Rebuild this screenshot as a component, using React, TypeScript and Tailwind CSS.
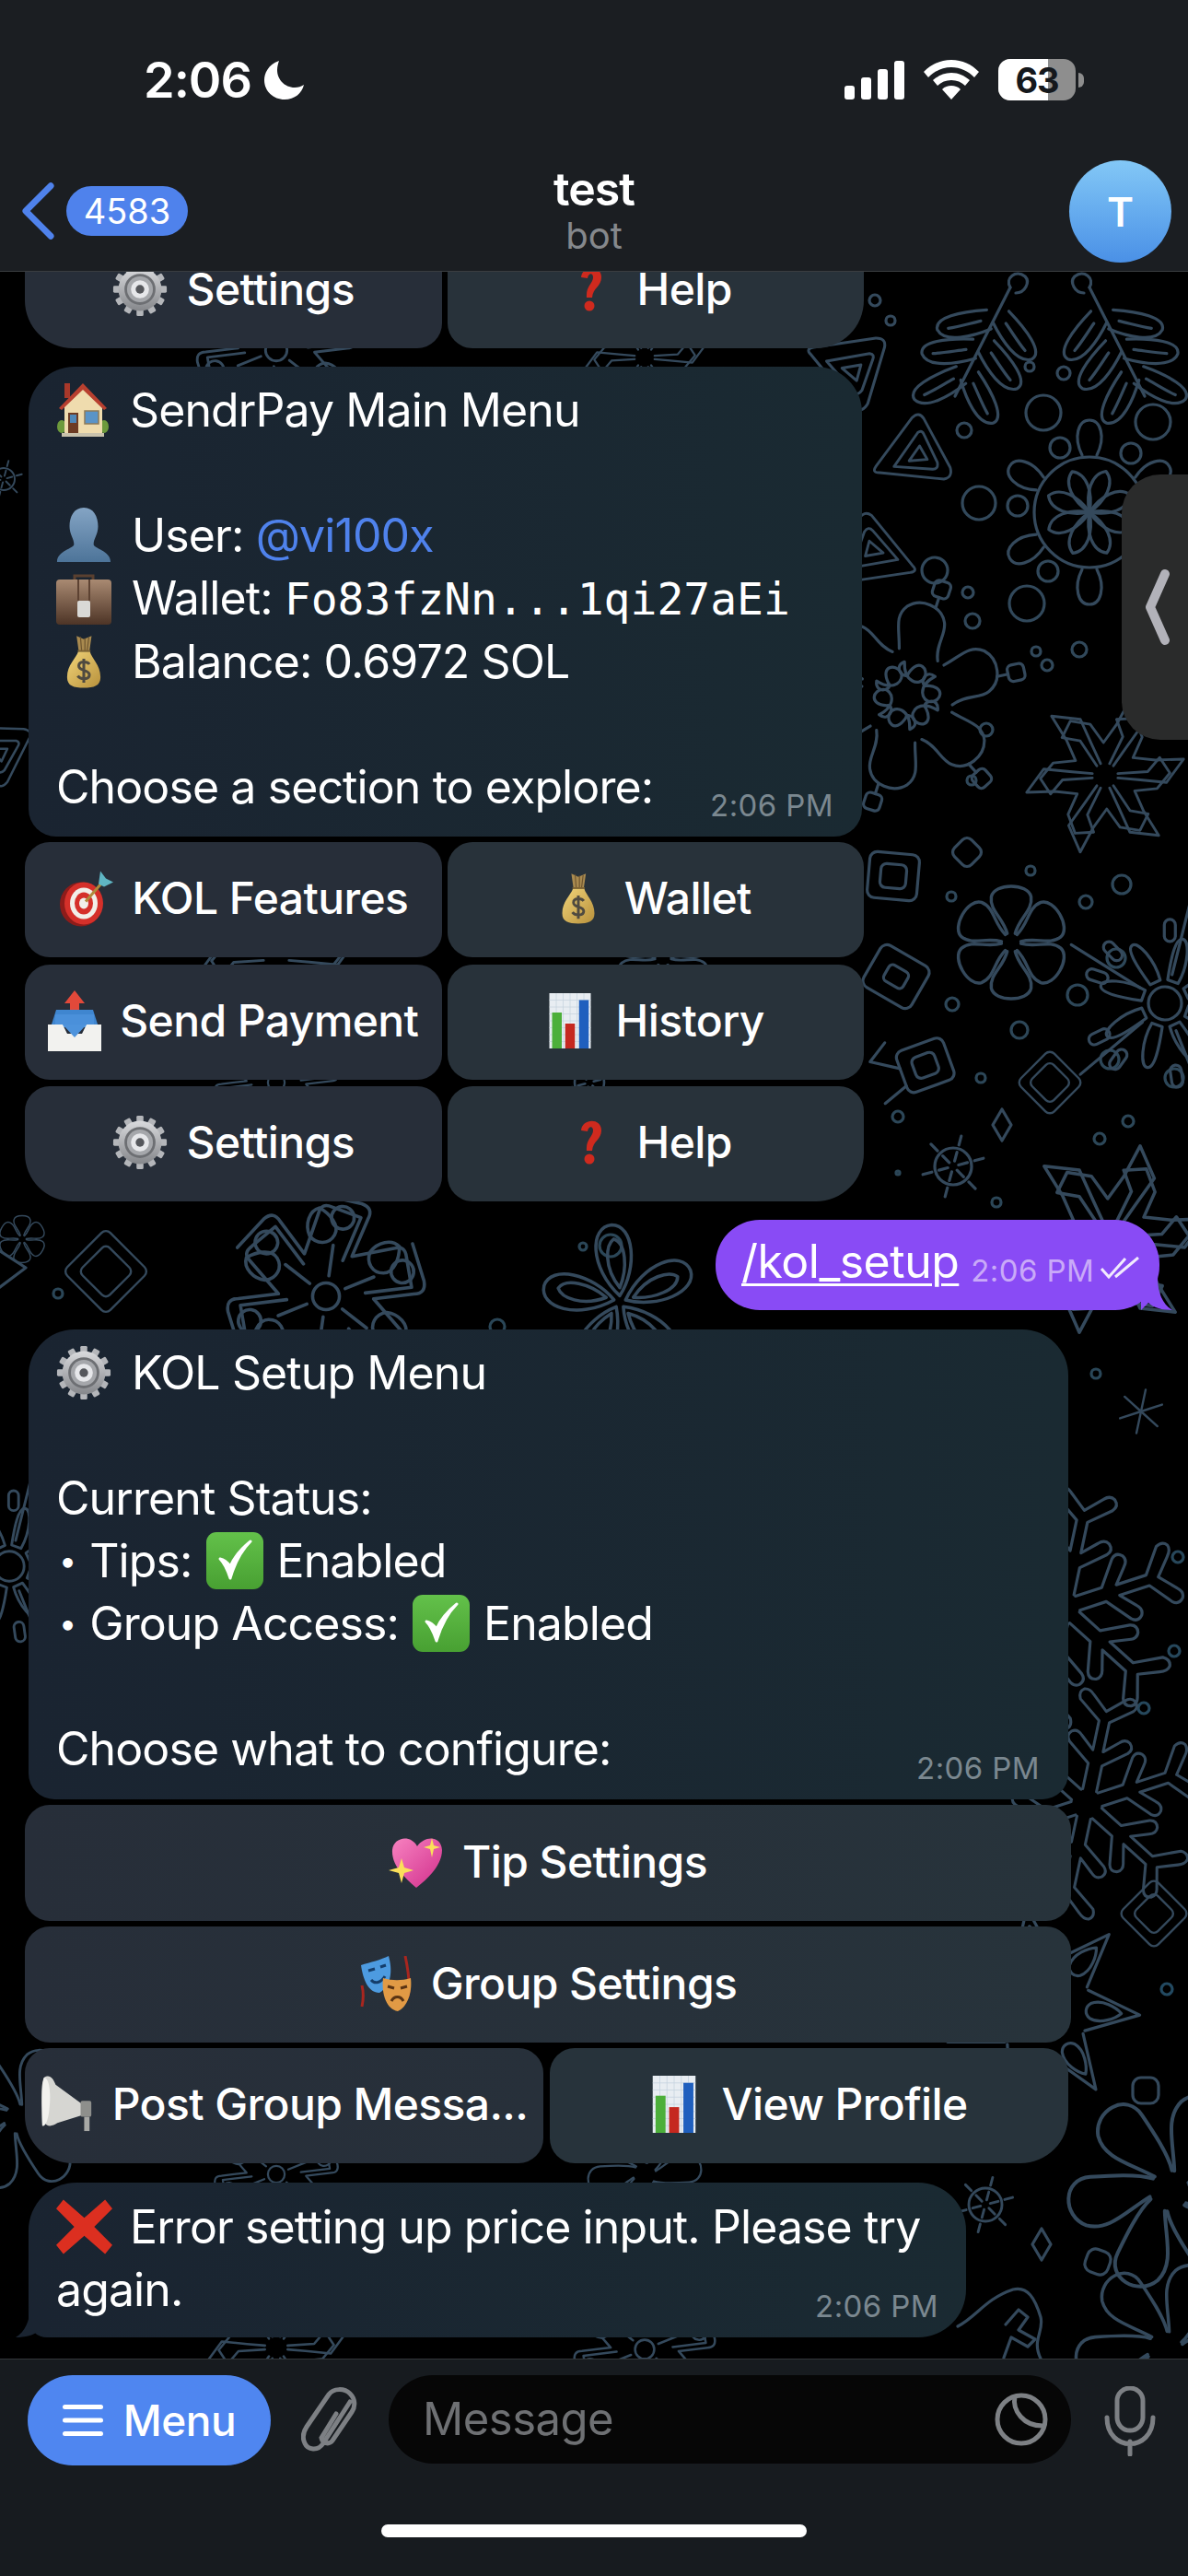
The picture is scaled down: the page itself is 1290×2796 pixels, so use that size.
import type { ReactNode } from "react";

const sans = "font-['Inter','Noto_Sans',sans-serif]";

/* ---------- emoji, drawn because no colour emoji font is installed ---------- */

function Gear({ className }: { className: string }) {
  const teeth = Array.from({ length: 12 }, (_, i) => i * 30);
  return (
    <svg viewBox="0 0 64 64" className={className}>
      <defs>
        <linearGradient id="gearBody" x1="0" y1="0" x2="0" y2="1">
          <stop offset="0" stopColor="#d9dadd" />
          <stop offset="1" stopColor="#85878b" />
        </linearGradient>
      </defs>
      {teeth.map((a) => (
        <rect key={a} x="28" y="1" width="8" height="12" rx="1.5" fill="#b4b6ba" transform={`rotate(${a} 32 32)`} />
      ))}
      <circle cx="32" cy="32" r="25" fill="url(#gearBody)" />
      <circle cx="32" cy="32" r="18" fill="#6d6f73" />
      <circle cx="32" cy="32" r="15" fill="#a5a7ab" />
      <circle cx="32" cy="32" r="10.5" fill="#e6e7ea" />
      <circle cx="32" cy="32" r="5" fill="#55575c" />
    </svg>
  );
}

function MoneyBag({ className }: { className: string }) {
  return (
    <svg viewBox="0 0 64 96" className={className}>
      <defs>
        <linearGradient id="bagBody" x1="0" y1="0" x2="1" y2="1">
          <stop offset="0" stopColor="#f1d479" />
          <stop offset="1" stopColor="#b8913c" />
        </linearGradient>
      </defs>
      <path d="M19 2 L32 8 L46 2 L42 30 L23 30 Z" fill="#a98a4f" />
      <path d="M26 4 L28 28 M34 6 L34 28 M41 5 L38 28" stroke="#6f5630" strokeWidth="2" />
      <path d="M22 30 L43 30 C46 42 62 54 62 76 C62 92 50 95 32 95 C14 95 2 92 2 76 C2 54 18 42 22 30 Z" fill="url(#bagBody)" />
      <path d="M21 29 H44" stroke="#7c6232" strokeWidth="3" />
      <path d="M42 53 C38 47 23 47 23 56 C23 66 42 62 42 72 C42 81 26 81 21 74 M32 43 V86" fill="none" stroke="#4f4a40" strokeWidth="5" />
    </svg>
  );
}

function BarChart({ className }: { className: string }) {
  return (
    <svg viewBox="0 0 60 80" className={className}>
      <rect width="60" height="80" fill="#e8edf2" />
      <path d="M0 10H60M0 20H60M0 30H60M0 40H60M0 50H60M0 60H60M0 70H60M10 0V80M20 0V80M30 0V80M40 0V80M50 0V80" stroke="#c5d3de" strokeWidth="1" />
      <rect x="4" y="28" width="14" height="52" fill="#4caf3a" />
      <rect x="23" y="44" width="14" height="36" fill="#c5281f" />
      <rect x="43" y="10" width="14" height="70" fill="#1f5fbe" />
    </svg>
  );
}

function CheckBox({ className }: { className: string }) {
  return (
    <svg viewBox="0 0 62 62" className={className}>
      <defs>
        <linearGradient id="checkBody" x1="0" y1="0" x2="0" y2="1">
          <stop offset="0" stopColor="#63c14a" />
          <stop offset="1" stopColor="#48a032" />
        </linearGradient>
      </defs>
      <rect width="62" height="62" rx="11" fill="url(#checkBody)" />
      <path d="M15 29 C19 33 23 41 26 50 C31 33 38 20 48 10 C38 18 30 28 26 37 C23 33 20 30 15 29 Z" fill="#fff" stroke="#fff" strokeWidth="3" strokeLinejoin="round" />
    </svg>
  );
}

function House({ className }: { className: string }) {
  return (
    <svg viewBox="0 0 58 58" className={className}>
      <ellipse cx="6" cy="47" rx="5" ry="7" fill="#6d9a3c" />
      <ellipse cx="52" cy="47" rx="5" ry="7" fill="#6d9a3c" />
      <rect x="9" y="0" width="6" height="16" fill="#a8382a" />
      <path d="M9 24 L29 3 L50 24 V54 H9 Z" fill="#efdcae" />
      <path d="M3 27 L29 0 L55 27 L52 29 L29 7 L6 29 Z" fill="#b8402f" />
      <rect x="13" y="32" width="11" height="22" fill="#6d3c24" />
      <rect x="15" y="34" width="7" height="9" fill="#4e87b8" />
      <rect x="31" y="30" width="15" height="14" fill="#5a94c8" stroke="#8d7a58" strokeWidth="1.5" />
      <rect x="6" y="54" width="46" height="4" fill="#c9c2ac" />
    </svg>
  );
}

function Bust({ className }: { className: string }) {
  return (
    <svg viewBox="0 0 60 62" className={className}>
      <defs>
        <linearGradient id="bustBody" x1="0" y1="0" x2="0" y2="1">
          <stop offset="0" stopColor="#84a4c4" />
          <stop offset="1" stopColor="#4d7499" />
        </linearGradient>
      </defs>
      <path d="M30 0 C41 0 46 10 46 21 C46 30 41 35 41 41 C41 46 60 48 60 61 H0 C0 48 19 46 19 41 C19 35 14 30 14 21 C14 10 19 0 30 0 Z" fill="url(#bustBody)" />
    </svg>
  );
}

function Briefcase({ className }: { className: string }) {
  return (
    <svg viewBox="0 0 60 56" className={className}>
      <defs>
        <linearGradient id="caseBody" x1="0" y1="0" x2="0" y2="1">
          <stop offset="0" stopColor="#a98a72" />
          <stop offset="1" stopColor="#4d3426" />
        </linearGradient>
      </defs>
      <path d="M20 8 V3 H40 V8" fill="none" stroke="#5a4030" strokeWidth="3" />
      <rect y="7" width="60" height="49" rx="4" fill="url(#caseBody)" />
      <path d="M24 7 V30 M36 7 V30" stroke="#5d4232" strokeWidth="2" />
      <rect x="23" y="30" width="14" height="18" rx="2" fill="#d9d9d6" />
    </svg>
  );
}

function Target({ className }: { className: string }) {
  return (
    <svg viewBox="0 0 60 60" className={className}>
      <ellipse cx="25" cy="36" rx="23" ry="24" fill="#8e1c1a" />
      <ellipse cx="28" cy="35" rx="21" ry="23" fill="#d5302a" />
      <ellipse cx="28" cy="35" rx="15" ry="17" fill="#f1efe9" />
      <ellipse cx="28" cy="35" rx="10" ry="12" fill="#d5302a" />
      <ellipse cx="28" cy="35" rx="5" ry="6" fill="#f1efe9" />
      <path d="M30 33 L50 10" stroke="#b08a3c" strokeWidth="3" />
      <path d="M44 14 L46 0 L52 8 L60 12 L50 17 Z" fill="#5fb6c4" />
    </svg>
  );
}

function Outbox({ className }: { className: string }) {
  return (
    <svg viewBox="0 0 58 66" className={className}>
      <path d="M29 0 L40 14 H34 V24 H24 V14 H18 Z" fill="#e2493a" />
      <path d="M9 21 H49 L55 40 H3 Z" fill="#3f86d0" />
      <path d="M8 26 H50 V40 H8 Z" fill="#4a90da" />
      <path d="M0 37 H16 L21 47 H37 L42 37 H58 V66 H0 Z" fill="#f2f2ef" />
      <path d="M16 37 L29 51 L42 37 Z" fill="#4d93dc" />
    </svg>
  );
}

function Question({ className }: { className: string }) {
  return (
    <svg viewBox="0 0 26 48" className={className}>
      <path d="M2 11 C3 -2 24 -3 24 11 C24 21 15 22 14 33 H8 C7 20 15 18 15 11 C15 6 10 6 9 12 Z" fill="#cf2a1e" />
      <circle cx="11" cy="42" r="5.5" fill="#cf2a1e" />
    </svg>
  );
}

function SparkleHeart({ className }: { className: string }) {
  return (
    <svg viewBox="0 0 60 58" className={className}>
      <defs>
        <linearGradient id="heartBody" x1="0" y1="0" x2="1" y2="1">
          <stop offset="0" stopColor="#f782c0" />
          <stop offset="1" stopColor="#d12f8c" />
        </linearGradient>
      </defs>
      <path d="M30 57 C14 44 3 30 4 16 C5 3 23 -2 31 12 C39 0 57 0 58 16 C58 32 44 46 30 57 Z" fill="url(#heartBody)" />
      <path d="M14 25 L17 35 L27 38 L17 41 L14 52 L11 41 L0 38 L11 35 Z" fill="#fbe05a" />
      <path d="M47 3 L49 11 L56 13 L49 15 L47 24 L45 15 L38 13 L45 11 Z" fill="#fbe05a" />
    </svg>
  );
}

function Masks({ className }: { className: string }) {
  return (
    <svg viewBox="0 0 58 60" className={className}>
      <path d="M50 0 C53 14 56 30 53 44" fill="none" stroke="#a8261f" strokeWidth="3" />
      <path d="M3 32 C5 40 5 46 3 55" fill="none" stroke="#a8261f" strokeWidth="3" />
      <path d="M2 10 C12 7 24 4 32 0 C36 14 36 32 22 40 C10 40 4 25 2 10 Z" fill="#4d9be0" />
      <path d="M10 16 L17 14 M23 12 L29 10" stroke="#153e6b" strokeWidth="3" />
      <path d="M13 26 C17 31 24 29 28 22" fill="none" stroke="#153e6b" strokeWidth="3" />
      <path d="M26 24 C36 27 46 27 56 24 C58 40 52 56 42 60 C30 58 24 42 26 24 Z" fill="#e19a45" />
      <path d="M31 33 L38 35 M45 35 L52 33" stroke="#5a3414" strokeWidth="3" />
      <path d="M35 49 C38 43 45 43 48 49" fill="none" stroke="#5a3414" strokeWidth="3" />
    </svg>
  );
}

function Megaphone({ className }: { className: string }) {
  return (
    <svg viewBox="0 0 58 64" className={className}>
      <path d="M3 2 C9 -2 13 2 16 10 L46 32 L46 44 L18 53 C10 58 1 60 1 36 C0 20 0 8 3 2 Z" fill="#d6d6d2" />
      <path d="M3 2 C9 2 11 20 9 36 C8 50 4 58 1 56 C0 40 0 12 3 2 Z" fill="#f2f2ef" />
      <rect x="44" y="28" width="12" height="18" rx="2" fill="#8e8f8c" />
      <path d="M48 46 V62 H54 V46" fill="#a7a8a5" />
    </svg>
  );
}

function RedCross({ className }: { className: string }) {
  return (
    <svg viewBox="0 0 62 60" className={className}>
      <path d="M8 0 L31 20 L54 0 L62 10 L42 30 L62 50 L54 60 L31 40 L8 60 L0 50 L20 30 L0 10 Z" fill="#dc2f20" />
    </svg>
  );
}

/* ---------- wallpaper doodles ---------- */

function Spin({ n, children, at = 0 }: { n: number; children: ReactNode; at?: number }) {
  return (
    <>
      {Array.from({ length: n }, (_, i) => (
        <g key={i} transform={`rotate(${at + (i * 360) / n})`}>
          {children}
        </g>
      ))}
    </>
  );
}

function At({ x, y, r = 0, s = 1, flip = false, children }: { x: number; y: number; r?: number; s?: number; flip?: boolean; children: ReactNode }) {
  return <g transform={`translate(${x} ${y}) rotate(${r}) scale(${flip ? -s : s} ${s})`}>{children}</g>;
}

function Rings({ items }: { items: number[][] }) {
  return (
    <>
      {items.map(([x, y, r]) => (
        <circle key={`${x}-${y}`} cx={x} cy={y} r={r} />
      ))}
    </>
  );
}

const Tri = () => (
  <>
    <path d="M-44 -30 Q-50 -38 -40 -38 L32 -36 Q44 -34 40 -24 L10 36 Q2 46 -6 38 Z" />
    <path d="M-28 -20 L22 -20 Q28 -18 24 -12 L6 20 Q0 26 -4 20 Z" />
    <path d="M-12 -9 L10 -9 L2 8 Z" />
  </>
);

const DoubleDiamond = ({ a = 30, b = 20 }: { a?: number; b?: number }) => (
  <>
    <rect x={-a} y={-a} width={a * 2} height={a * 2} rx="9" transform="rotate(45) scale(0.75)" />
    <rect x={-b} y={-b} width={b * 2} height={b * 2} rx="8" transform="rotate(45) scale(0.75)" />
  </>
);

const Petal6 = () => (
  <Spin n={6}>
    <path d="M-4 -9 C-8 -25 -22 -32 -20 -46 C-17 -60 17 -60 20 -46 C22 -32 8 -25 4 -9" />
  </Spin>
);

const Lobe = ({ x, y, r }: { x: number; y: number; r: number }) => (
  <g transform={`translate(${x} ${y}) rotate(${r})`}>
    <path d="M0 9 C-20 14 -52 18 -58 2 C-60 -12 -30 -14 -2 -12" />
    <path d="M-10 -1 C-22 0 -34 2 -46 2" />
  </g>
);

const Fern = () => (
  <>
    <path d="M-30 66 L30 -52" />
    <Lobe x={8} y={-16} r={-8} />
    <Lobe x={-8} y={16} r={-2} />
    <Lobe x={-22} y={44} r={-24} />
    <g transform="scale(-1 1)">
      <Lobe x={-18} y={-20} r={-50} />
      <Lobe x={-2} y={12} r={-50} />
      <Lobe x={16} y={44} r={-60} />
    </g>
    <path d="M30 -52 C24 -62 36 -72 46 -64 C52 -58 46 -46 36 -46" />
  </>
);

const WheelFlake = () => (
  <>
    <circle r="60" />
    <Spin n={8} at={22}>
      <path d="M0 0 C-12 -18 -14 -40 0 -48 C14 -40 12 -18 0 0 Z" />
    </Spin>
    <Spin n={6}>
      <path d="M-8 -62 C-18 -82 -12 -100 0 -100 C12 -100 18 -82 8 -62" />
    </Spin>
  </>
);

const Sunburst = () => (
  <>
    <circle r="18" />
    <Spin n={8} at={20}>
      <path d="M-6 -25 C-10 -45 -14 -70 -6 -72 C2 -74 10 -48 6 -25 Z" />
    </Spin>
    <Spin n={5} at={-58}>
      <path d="M0 -32 L0 -120" />
      <rect x="-20" y="-90" width="12" height="24" rx="6" transform="rotate(-14 -14 -78)" />
      <rect x="12" y="-90" width="12" height="24" rx="6" transform="rotate(14 18 -78)" />
    </Spin>
  </>
);

const Wheel = () => (
  <>
    <circle r="20" />
    <Spin n={6} at={15}>
      <path d="M0 -6 L0 -16 M0 -24 L0 -34" />
    </Spin>
  </>
);

const BlobFlower = () => (
  <>
    <Spin n={6} at={18}>
      <path d="M-14 -30 C-26 -20 -6 -10 -6 -20 C0 -40 14 -30 12 -20 C10 -10 -8 -8 -14 -30 Z" transform="translate(0 -4)" />
      <path d="M-24 -46 C-30 -66 -40 -78 -30 -92 C-18 -106 6 -104 14 -88 C20 -76 12 -62 20 -46" />
      <path d="M0 -100 L0 -112" />
      <rect x="-9" y="-130" width="18" height="18" rx="5" />
    </Spin>
  </>
);

const BigFlake = () => (
  <>
    <circle r="13" />
    <Spin n={6} at={8}>
      <path d="M0 -20 L0 -50" />
      <path d="M-24 -56 C-30 -66 -28 -80 -18 -84 C-8 -80 4 -70 0 -60 C-4 -50 -16 -48 -24 -56 Z" />
    </Spin>
    <Spin n={6} at={38}>
      <path d="M-62 -76 L-28 -92 Q-16 -96 -14 -84 L-4 -46 L24 -78 Q30 -86 38 -78 L60 -58 L28 -26" />
      <circle cx="-34" cy="-70" r="11" />
    </Spin>
  </>
);

const LeafFlake = () => (
  <>
    <Spin n={6}>
      <path d="M-10 -12 L-30 -42 L-52 -46 L-42 -66 L-18 -62 L-2 -40 L14 -62 L30 -92 L44 -60 L24 -32 L10 -12" />
    </Spin>
  </>
);

const ArmFlake = () => (
  <Spin n={6} at={12}>
    <path d="M-8 -16 L-8 -46 L-34 -66 Q-40 -72 -34 -78 Q-28 -82 -22 -76 L-6 -62 L-6 -96 L-32 -116 Q-36 -124 -30 -128 Q-24 -130 -18 -124 L0 -108 L18 -124 Q24 -130 30 -126 Q36 -120 30 -114 L6 -96 L6 -62 L22 -76 Q28 -82 34 -78 Q40 -72 34 -66 L8 -46 L8 -16" />
  </Spin>
);

const Splat = () => (
  <Spin n={6} at={-20}>
    <path d="M-8 -16 C-24 -34 -44 -46 -42 -66 C-38 -88 -6 -94 0 -70 C4 -54 10 -30 8 -16" />
  </Spin>
);

const Spiky = () => (
  <Spin n={7} at={-8}>
    <path d="M-22 -50 L0 -108 L22 -50" />
    <path d="M-8 -54 C-14 -66 -6 -82 0 -88 C6 -82 14 -66 8 -54 C4 -48 -4 -48 -8 -54 Z" />
  </Spin>
);

function Wallpaper() {
  return (
    <svg className="absolute inset-0 h-full w-full" viewBox="0 295 1290 2265" preserveAspectRatio="none">
      <defs>
        <linearGradient id="doodle" gradientUnits="userSpaceOnUse" x1="0" y1="295" x2="0" y2="2560">
          <stop offset="0" stopColor="#34495c" />
          <stop offset="0.5" stopColor="#2a4657" />
          <stop offset="1" stopColor="#1e4b66" />
        </linearGradient>
      </defs>
      <g fill="none" stroke="url(#doodle)" strokeWidth="3.2" strokeLinecap="round" strokeLinejoin="round">
        <Rings
          items={[
            [950, 326, 6], [967, 348, 5], [1118, 398, 5], [1155, 405, 7], [1047, 467, 8], [1015, 619, 14], [1051, 643, 6],
            [1056, 674, 8], [1172, 705, 8], [1125, 707, 5], [1137, 722, 6], [1071, 792, 7], [1055, 847, 5],
            [1119, 945, 5], [1033, 973, 5], [1218, 960, 10], [1179, 979, 7], [1034, 1090, 7], [1107, 1118, 9],
            [1065, 1170, 5], [975, 1212, 6], [1082, 1305, 5], [1225, 1217, 6], [1194, 1236, 6], [975, 1273, 2],
            [1190, 1491, 5], [1279, 1690, 6], [1275, 1792, 6], [1242, 1854, 6], [1267, 2159, 6], [1110, 2030, 4],
            [1063, 546, 18], [1105, 549, 11], [1133, 448, 19], [1151, 486, 11], [1252, 458, 19], [1228, 492, 11],
            [1115, 655, 19], [1138, 620, 11], [1212, 1040, 10], [1170, 1080, 11], [1205, 1150, 10], [1275, 1170, 10],
            [633, 1353, 4], [663, 1352, 12], [63, 1404, 5], [540, 1440, 8],
          ]}
        />
        <At x={1067} y={364}><Fern /></At>
        <At x={1213} y={364} flip><Fern /></At>
        <At x={927} y={406} r={-10} s={0.95}><Tri /></At>
        <At x={1000} y={496} r={-55} s={0.9}><Tri /></At>
        <At x={947} y={594} r={170} s={0.9}><Tri /></At>
        <At x={1183} y={556}><WheelFlake /></At>
        <At x={985} y={755}><BlobFlower /></At>
        <At x={1200} y={842} s={0.9}><LeafFlake /></At>
        <At x={970} y={951} r={5}>
          <rect x="-27" y="-25" width="54" height="50" rx="8" />
          <rect x="-14" y="-13" width="28" height="26" rx="6" />
        </At>
        <At x={1050} y={925} r={45}><rect x="-13" y="-13" width="26" height="26" rx="7" /></At>
        <At x={1098} y={1023} s={1.08}><Petal6 /></At>
        <At x={1265} y={1089}><Sunburst /></At>
        <At x={973} y={1060} r={30}>
          <rect x="-30" y="-26" width="60" height="52" rx="8" />
          <rect x="-12" y="-10" width="24" height="20" rx="5" />
        </At>
        <At x={1000} y={1158} r={-20}>
          <rect x="-22" y="-24" width="54" height="48" rx="8" />
          <rect x="-8" y="-12" width="26" height="24" rx="6" />
          <path d="M-22 -6 L-50 -24 L-28 -38 M-22 14 L-50 24" />
        </At>
        <At x={1140} y={1175}><DoubleDiamond a={34} b={22} /></At>
        <At x={1088} y={1221}>
          <path d="M0 -17 L10 0 L0 17 L-10 0 Z" />
        </At>
        <At x={1035} y={1266}><Wheel /></At>
        <At x={1205} y={1345} s={1.1}><LeafFlake /></At>
        <At x={1239} y={1532} s={0.75}>
          <Spin n={6} at={12}><path d="M0 0 L0 -32" /></Spin>
        </At>
        <At x={1155} y={1745} s={1}><ArmFlake /></At>
        <At x={1180} y={1958} s={0.95}><ArmFlake /></At>
        <At x={1253} y={2077}><DoubleDiamond a={36} b={22} /></At>
        <At x={1130} y={2178}><Spiky /></At>
        <At x={1244} y={2269}><rect x="-14" y="-14" width="28" height="28" rx="9" /></At>
        <At x={1270} y={2378} s={1.25}><Splat /></At>
        <At x={1070} y={2393} s={0.9}><Wheel /></At>
        <At x={1131} y={2436}><path d="M0 -17 L10 0 L0 17 L-10 0 Z" /></At>
        <At x={1192} y={2455} r={20}><rect x="-13" y="-13" width="26" height="26" rx="9" /></At>
        <At x={1110} y={2525}>
          <path d="M-70 0 C-50 -10 -40 -30 -10 -40 C6 -44 14 -30 20 -10 C24 6 10 14 20 35" />
          <path d="M-18 -2 L-4 -18 L6 -10 L-4 4 L14 14 L6 22 L-12 12 L-20 34" />
        </At>
        <At x={1265} y={2550} s={1.1}><Splat /></At>

        {/* seen only through the gaps between messages */}
        <At x={115} y={1380}><DoubleDiamond a={44} b={28} /></At>
        <At x={354} y={1407} s={1.12}><BigFlake /></At>
        <At x={673} y={1413} s={1.1}>
          <Spin n={5}>
            <path d="M0 -6 C-30 -34 -30 -74 -8 -76 C14 -76 18 -34 0 -6 Z" />
            <path d="M0 -14 C-16 -34 -14 -56 -6 -62 C6 -58 8 -34 0 -14 Z" />
          </Spin>
        </At>
        <At x={8} y={1380}><path d="M-20 -30 L20 -4 L-20 26" /></At>
        <At x={24} y={1345} s={0.45}><Petal6 /></At>
        <At x={300} y={380} s={0.9}><BigFlake /></At>
        <At x={700} y={388} s={0.7}><LeafFlake /></At>
        <At x={4} y={520} s={0.6}><Wheel /></At>
        <At x={0} y={820} s={0.8}><Tri /></At>
        <At x={300} y={1040} s={0.9}><LeafFlake /></At>
        <At x={720} y={1040} s={0.9}><Petal6 /></At>
        <At x={300} y={1175} s={0.7}><BigFlake /></At>
        <At x={640} y={1175} s={0.8}><Wheel /></At>
        <At x={300} y={2360} s={0.7}><BigFlake /></At>
        <At x={700} y={2360} s={0.7}><Splat /></At>
        <At x={20} y={2300} s={0.9}><Splat /></At>
        <At x={10} y={1700} s={0.9}><Sunburst /></At>
        <At x={300} y={2548} s={0.8}><LeafFlake /></At>
        <At x={700} y={2550} s={0.8}><BigFlake /></At>
      </g>
    </svg>
  );
}

/* ---------- status bar and header ---------- */

function StatusBar() {
  return (
    <div className="flex h-[174px] items-start justify-between pl-[156px] pr-[113px] pt-[64px]">
      <div className="flex items-center gap-[14px]">
        <span className="text-[54px] font-semibold leading-[46px] tracking-[-1px] text-white">2:06</span>
        <svg viewBox="0 0 44 42" className="h-[42px] w-[44px]">
          <path d="M16 0 C4 4 0 14 0 21 C0 33 10 42 22 42 C33 42 41 35 43 26 C40 28 37 29 33 29 C22 29 14 20 14 10 C14 6 15 3 16 0 Z" fill="#fff" />
        </svg>
      </div>
      <div className="flex items-center gap-[21px]">
        <svg viewBox="0 0 65 42" className="h-[42px] w-[65px]" fill="#fff">
          <rect x="0" y="27" width="11" height="15" rx="3" />
          <rect x="18" y="18" width="11" height="24" rx="3" />
          <rect x="36" y="9" width="11" height="33" rx="3" />
          <rect x="54" y="0" width="11" height="42" rx="3" />
        </svg>
        <svg viewBox="0 0 60 43" className="h-[43px] w-[60px]" fill="#fff">
          <path d="M30 0 C42 0 52 5 60 13 L55 19 C48 12 40 8 30 8 C20 8 12 12 5 19 L0 13 C8 5 18 0 30 0 Z" />
          <path d="M30 14 C38 14 44 17 50 22 L45 28 C41 24 36 22 30 22 C24 22 19 24 15 28 L10 22 C16 17 22 14 30 14 Z" />
          <path d="M30 28 C34 28 37 29 40 32 L30 43 L20 32 C23 29 26 28 30 28 Z" />
        </svg>
        <div className="flex items-center gap-[3px]">
          <div className="relative flex h-[45px] w-[84px] items-center justify-center rounded-[13px] bg-[#8e8e8e]">
            <div className="absolute inset-y-0 left-0 w-[54px] rounded-l-[13px] bg-white" />
            <span className="relative text-[38px] font-bold leading-[40px] tracking-[-1px] text-[#15181c]">63</span>
          </div>
          <div className="h-[16px] w-[6px] rounded-r-full bg-[#8e8e8e]" />
        </div>
      </div>
    </div>
  );
}

function Header() {
  return (
    <header className="relative z-10 h-[295px] shrink-0 border-b border-[#3a3d40] bg-[#1b1e22]">
      <StatusBar />
      <div className="relative flex h-[120px] items-start justify-between pl-[23px] pr-[18px]">
        <div className="mt-[23px] flex items-center gap-[12px]">
          <svg viewBox="0 0 38 64" className="h-[64px] w-[37px]">
            <path d="M33 4 L5 32 L33 60" fill="none" stroke="#4f82ec" strokeWidth="7" strokeLinecap="round" strokeLinejoin="round" />
          </svg>
          <span className="flex h-[54px] w-[132px] items-center justify-center rounded-full bg-[#4f82ec] text-[38px] leading-none text-white">4583</span>
        </div>
        <div className="absolute left-0 right-0 top-[1px] flex flex-col items-center">
          <span className="text-[50px] font-semibold leading-[60px] tracking-[-1px] text-white">test</span>
          <span className="text-[40px] leading-[42px] text-[#85888c]">bot</span>
        </div>
        <div className="flex h-[111px] w-[111px] items-center justify-center rounded-full bg-gradient-to-b from-[#83c8f6] to-[#4a90e6] text-[44px] font-semibold text-white">T</div>
      </div>
    </header>
  );
}

/* ---------- chat ---------- */

function Time({ className }: { className: string }) {
  return <span className={`absolute text-[33px] leading-none tracking-[0.4px] text-[#7b8890] ${className}`}>2:06 PM</span>;
}

function Bubble({ children, className }: { children: ReactNode; className: string }) {
  return (
    <div className={`relative ml-[4px] bg-gradient-to-r from-[#1a2431] to-[#1a2a32] pl-[30px] pt-[13px] text-[50px] leading-[68px] tracking-[-0.9px] text-white ${className}`}>
      {children}
    </div>
  );
}

function KeyButton({ icon, label, className = "h-[125px]", gap = "gap-[21px]" }: { icon?: ReactNode; label: string; className?: string; gap?: string }) {
  return (
    <button type="button" className={`flex items-center justify-center rounded-[27px] pb-[3px] text-[48px] font-medium leading-none tracking-[-0.6px] text-white ${gap} ${className}`}>
      {icon}
      <span className="whitespace-nowrap">{label}</span>
    </button>
  );
}

function MainMenuKeys() {
  return (
    <div className="grid w-[911px] grid-cols-2 gap-x-[6px] gap-y-[7.5px]">
      <KeyButton icon={<Target className="h-[61px] w-[60px]" />} label="KOL Features" gap="gap-[20px]" className="h-[125px] bg-[#272e39]" />
      <KeyButton icon={<MoneyBag className="h-[56px] w-[40px]" />} label="Wallet" gap="gap-[30px]" className="h-[125px] bg-[#28323a]" />
      <KeyButton icon={<Outbox className="h-[66px] w-[58px]" />} label="Send Payment" gap="gap-[20px]" className="h-[125px] bg-[#272e39]" />
      <KeyButton icon={<BarChart className="h-[60px] w-[50px]" />} label="History" gap="gap-[25px]" className="h-[125px] bg-[#28323a]" />
      <KeyButton icon={<Gear className="h-[60px] w-[60px]" />} label="Settings" gap="gap-[21px]" className="h-[125px] rounded-bl-[52px] bg-[#272e39]" />
      <KeyButton icon={<Question className="h-[48px] w-[26px]" />} label="Help" gap="gap-[37px]" className="h-[125px] rounded-br-[52px] bg-[#28323a]" />
    </div>
  );
}

function Conversation() {
  return (
    <main className="relative flex min-h-0 flex-1 flex-col justify-end overflow-hidden bg-black pb-[23px] pl-[27px]">
      <Wallpaper />
      <div className="relative flex flex-col">
        <div className="mb-[20px] grid w-[911px] grid-cols-2 gap-x-[6px]">
          <KeyButton icon={<Gear className="h-[60px] w-[60px]" />} label="Settings" className="h-[125px] rounded-bl-[52px] bg-[#272e39]" />
          <KeyButton icon={<Question className="h-[48px] w-[26px]" />} label="Help" gap="gap-[37px]" className="h-[125px] rounded-br-[52px] bg-[#28323a]" />
        </div>

        <Bubble className="mb-[6px] h-[510px] w-[905px] rounded-b-[30px] rounded-t-[50px]">
          <div className="flex items-center gap-[22px]"><House className="h-[58px] w-[58px]" /><span>SendrPay Main Menu</span></div>
          <div className="h-[68px]" />
          <div className="flex items-center gap-[22px]"><Bust className="h-[60px] w-[60px]" /><span>User: <span className="text-[#4f82ec]">@vi100x</span></span></div>
          <div className="flex items-center gap-[22px]">
            <Briefcase className="h-[56px] w-[60px]" />
            <span>Wallet: <span className="font-['DejaVu_Sans_Mono',monospace] text-[48px] tracking-normal">Fo83fzNn...1qi27aEi</span></span>
          </div>
          <div className="flex items-center gap-[22px]"><span className="flex w-[60px] justify-center"><MoneyBag className="h-[58px] w-[42px]" /></span><span>Balance: 0.6972 SOL</span></div>
          <div className="h-[68px]" />
          <div>Choose a section to explore:</div>
          <Time className="bottom-[17px] right-[31px]" />
        </Bubble>
        <MainMenuKeys />

        <div className="mb-[21px] mt-[20px] flex justify-end pr-[31px]">
          <div className="relative flex h-[98px] w-[482px] items-start rounded-[48px] bg-[#894bf5] pl-[28px] pt-[15px]">
            <span className="text-[50px] leading-[60px] tracking-[-0.5px] text-white underline decoration-[3px] underline-offset-[6px]">/kol_setup</span>
            <span className="ml-[13px] mt-[24px] text-[33px] leading-none tracking-[0.4px] text-[#c9aaf8]">2:06 PM</span>
            <svg viewBox="0 0 42 24" className="ml-[7px] mt-[25px] h-[24px] w-[42px]">
              <path d="M1 13 L9 22 L27 2 M16 22 L41 1" fill="none" stroke="#f1eafd" strokeWidth="3" />
            </svg>
            <svg viewBox="0 0 34 36" className="absolute -right-[14px] bottom-0 h-[36px] w-[34px]">
              <path d="M0 0 H18 C18 18 24 30 34 36 C24 36 14 34 8 28 C4 32 2 34 0 36 Z" fill="#894bf5" />
            </svg>
          </div>
        </div>

        <Bubble className="mb-[6px] h-[510px] w-[1129px] rounded-b-[28px] rounded-t-[50px]">
          <div className="flex items-center gap-[22px]"><Gear className="h-[60px] w-[60px]" /><span>KOL Setup Menu</span></div>
          <div className="h-[68px]" />
          <div>Current Status:</div>
          <div className="flex items-center">
            <span className="ml-[3px] mr-[15px] text-[34px]">•</span>
            <span>Tips:</span>
            <CheckBox className="mx-[15px] h-[62px] w-[62px]" />
            <span>Enabled</span>
          </div>
          <div className="flex items-center">
            <span className="ml-[3px] mr-[15px] text-[34px]">•</span>
            <span>Group Access:</span>
            <CheckBox className="mx-[15px] h-[62px] w-[62px]" />
            <span>Enabled</span>
          </div>
          <div className="h-[68px]" />
          <div>Choose what to configure:</div>
          <Time className="bottom-[17px] right-[31px]" />
        </Bubble>
        <div className="flex w-[1136px] flex-col gap-[6px]">
          <KeyButton icon={<SparkleHeart className="h-[58px] w-[60px]" />} label="Tip Settings" gap="gap-[20px]" className="h-[126px] bg-gradient-to-r from-[#272e39] to-[#27333b]" />
          <KeyButton icon={<Masks className="h-[60px] w-[58px]" />} label="Group Settings" gap="gap-[20px]" className="h-[126px] bg-gradient-to-r from-[#272e39] to-[#27333b]" />
          <div className="grid grid-cols-2 gap-x-[7px] pr-[3px]">
            <KeyButton icon={<Megaphone className="h-[62px] w-[58px]" />} label="Post Group Messa..." gap="gap-[20px]" className="h-[125px] rounded-bl-[52px] bg-gradient-to-r from-[#272e39] to-[#27303a]" />
            <KeyButton icon={<BarChart className="h-[62px] w-[52px]" />} label="View Profile" gap="gap-[25px]" className="h-[125px] rounded-br-[52px] bg-[#27333b]" />
          </div>
        </div>

        <Bubble className="mt-[21px] h-[168px] w-[1018px] rounded-[52px] rounded-bl-[20px] pt-[14px]">
          <div className="flex items-center gap-[19px]"><RedCross className="h-[60px] w-[61px]" /><span>Error setting up price input. Please try</span></div>
          <div>again.</div>
          <Time className="bottom-[17px] right-[30px]" />
          <svg viewBox="0 0 34 36" className="absolute -left-[14px] bottom-0 h-[36px] w-[34px]">
            <path d="M34 0 H16 C16 18 10 30 0 36 C10 36 20 34 26 28 C30 32 32 34 34 36 Z" fill="#1a2431" />
          </svg>
        </Bubble>
      </div>
    </main>
  );
}

/* ---------- input bar ---------- */

function InputBar() {
  return (
    <footer className="relative z-10 flex h-[236px] shrink-0 flex-col border-t border-[#33373a] bg-[#171b1f]">
      <div className="flex items-start pl-[30px] pt-[17px]">
        <button type="button" className="flex h-[98px] w-[264px] items-center justify-center gap-[22px] rounded-full bg-[#4f86f0] text-[46px] font-medium tracking-[-0.5px] text-white">
          <svg viewBox="0 0 44 34" className="h-[34px] w-[44px]" fill="#fff">
            <rect width="44" height="5" rx="2.5" />
            <rect y="14.5" width="44" height="5" rx="2.5" />
            <rect y="29" width="44" height="5" rx="2.5" />
          </svg>
          Menu
        </button>
        <svg viewBox="0 0 62 72" className="ml-[33px] mt-[13px] h-[72px] w-[62px]">
          <path d="M53 15 L24 60 C18 69 7 67 4 60 C1 54 2 48 6 42 L30 7 C35 0 47 0 53 6 C59 12 59 20 55 26 L34 57 C30 62 23 60 22 54 L38 28" transform="translate(0 1)" fill="none" stroke="#7d8084" strokeWidth="5" strokeLinecap="round" />
        </svg>
        <div className="ml-[33px] flex h-[96px] w-[741px] items-center justify-between rounded-full bg-[#060606] pl-[37px] pr-[24px]">
          <span className="text-[49px] tracking-[-0.5px] text-[#6e7073]">Message</span>
          <svg viewBox="0 0 60 60" className="h-[60px] w-[60px]">
            <circle cx="30" cy="30" r="26" fill="none" stroke="#7d8084" strokeWidth="5" />
            <path d="M23 5 C20 20 32 38 55 37" fill="none" stroke="#7d8084" strokeWidth="5" />
          </svg>
        </div>
        <svg viewBox="0 0 56 76" className="ml-[36px] mt-[12px] h-[76px] w-[56px]">
          <rect x="14" y="2" width="28" height="46" rx="14" fill="none" stroke="#7d8084" strokeWidth="5" />
          <path d="M3 34 C3 72 53 72 53 34 M28 60 V74" fill="none" stroke="#7d8084" strokeWidth="5" strokeLinecap="round" />
        </svg>
      </div>
      <div className="mx-auto mt-[64px] h-[14px] w-[462px] rounded-full bg-white" />
    </footer>
  );
}

export default function App() {
  return (
    <div className={`relative flex h-[2796px] w-[1290px] flex-col overflow-hidden bg-black ${sans}`}>
      <Header />
      <Conversation />
      <InputBar />
      {/* side panel handle */}
      <div className="absolute right-0 top-[515px] z-20 flex h-[288px] w-[72px] items-center rounded-l-[42px] bg-[#2a2b2b] pl-[25px]">
        <svg viewBox="0 0 28 84" className="h-[84px] w-[28px]">
          <path d="M22 6 L6 42 L22 78" fill="none" stroke="#b2b2b9" strokeWidth="10" strokeLinecap="round" strokeLinejoin="round" />
        </svg>
      </div>
    </div>
  );
}
